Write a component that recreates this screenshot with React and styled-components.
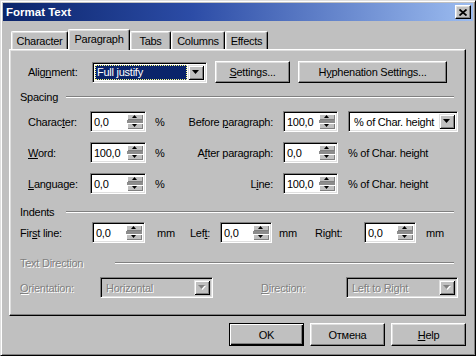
import React from 'react';
import styled, { createGlobalStyle } from 'styled-components';

const GlobalStyle = createGlobalStyle`
  html, body {
    margin: 0;
    padding: 0;
    background: #c0c0c0;
  }
  body {
    font-family: "Liberation Sans", Arial, sans-serif;
    font-size: 11px;
    letter-spacing: -0.25px;
    color: #000;
  }
`;

const Window = styled.div`
  width: 476px;
  height: 356px;
  box-sizing: border-box;
  background: #c0c0c0;
  border: 1px solid;
  border-color: #dfdfdf #000 #000 #dfdfdf;
  box-shadow: inset 1px 1px #fff, inset -1px -1px #808080;
  padding: 2px;
  display: flex;
  flex-direction: column;
`;

const TitleBar = styled.div`
  height: 18px;
  flex: none;
  display: flex;
  align-items: center;
  justify-content: space-between;
  padding: 0 2px 0 3px;
  background: linear-gradient(90deg, #0a246a 0%, #2c4ca6 40%, #9cbcf0 100%);
  color: #fff;
  font-weight: bold;
  font-size: 11.5px;
  letter-spacing: 0;
`;

const CloseBtn = styled.div`
  width: 16px;
  height: 14px;
  box-sizing: border-box;
  background: #c0c0c0;
  border: 1px solid;
  border-color: #fff #000 #000 #fff;
  box-shadow: inset -1px -1px #808080, inset 1px 1px #dfdfdf;
  display: flex;
  align-items: center;
  justify-content: center;
`;

const Body = styled.div`
  padding: 0 7px 0 6px;
  display: flex;
  flex-direction: column;
`;

const TabStrip = styled.div`
  display: flex;
  align-items: flex-end;
  height: 20px;
  margin-top: 8px;
  padding-left: 2px;
`;

const Tab = styled.div`
  width: ${p => p.w}px;
  height: ${p => (p.active ? 21 : 18)}px;
  margin-bottom: ${p => (p.active ? -1 : 0)}px;
  padding-bottom: ${p => (p.active ? 3 : 0)}px;
  box-sizing: border-box;
  border-top: 1px solid #fff;
  border-left: 1px solid #fff;
  border-right: 1px solid #000;
  border-radius: 2px 2px 0 0;
  box-shadow: inset -1px 0 #808080, inset 1px 1px #dfdfdf;
  background: #c0c0c0;
  display: flex;
  align-items: center;
  justify-content: center;
  position: relative;
  z-index: ${p => (p.active ? 1 : 0)};
`;

const Panel = styled.div`
  height: 267px;
  box-sizing: border-box;
  border: 1px solid;
  border-color: #fff #000 #000 #fff;
  box-shadow: inset -1px -1px #808080, inset 1px 1px #dfdfdf;
  padding: 11px 11px 0 10px;
  display: flex;
  flex-direction: column;
`;

const Row = styled.div`
  display: flex;
  align-items: center;
  height: ${p => p.h || 21}px;
  margin-top: ${p => p.mt || 0}px;
  margin-left: ${p => p.ml || 0}px;
`;

const Grid = styled.div`
  display: flex;
  flex-direction: column;
  gap: 10px;
  margin-top: ${p => p.mt}px;
  margin-left: ${p => p.ml || 0}px;
`;

const Label = styled.span`
  width: ${p => p.w}px;
  flex: none;
  margin-left: ${p => p.ml || 0}px;
  white-space: nowrap;
  text-align: ${p => (p.right ? 'right' : 'left')};
  color: ${p => (p.disabled ? '#808080' : '#000')};
  text-shadow: ${p => (p.disabled ? '1px 1px 0 #fff' : 'none')};
`;

const Key = styled.span`
  text-decoration: underline;
`;

const GroupHead = styled.div`
  display: flex;
  align-items: center;
  height: 14px;
  margin-top: ${p => p.mt}px;
`;

const GroupTitle = styled.span`
  width: ${p => p.w}px;
  flex: none;
  white-space: nowrap;
  color: ${p => (p.disabled ? '#808080' : '#000')};
  text-shadow: ${p => (p.disabled ? '1px 1px 0 #fff' : 'none')};
`;

const GroupLine = styled.div`
  flex: 1;
  height: 0;
  border-top: 1px solid #808080;
  border-bottom: 1px solid #fff;
`;

const Sunken = styled.div`
  width: ${p => p.w}px;
  height: 21px;
  flex: none;
  box-sizing: border-box;
  margin-left: ${p => p.ml || 0}px;
  border: 1px solid;
  border-color: #808080 #fff #fff #808080;
  box-shadow: inset 1px 1px #000, inset -1px -1px #dfdfdf;
  background: ${p => (p.disabled ? '#c0c0c0' : '#fff')};
  padding: 2px;
  display: flex;
`;

const FieldText = styled.div`
  flex: 1;
  padding-left: ${p => p.pl ?? 1}px;
  line-height: 16px;
  white-space: nowrap;
  overflow: hidden;
  color: ${p => (p.disabled ? '#808080' : '#000')};
  text-shadow: ${p => (p.disabled ? '1px 1px 0 #fff' : 'none')};
`;

const Highlight = styled.div`
  flex: 1;
  margin: 0 1px 0 0;
  padding-left: 2px;
  line-height: 15px;
  background: #0a246a;
  color: #fff;
  outline: 1px dotted #ffff80;
  outline-offset: -1px;
  white-space: nowrap;
`;

const Raised = styled.div`
  background: #c0c0c0;
  box-shadow: inset 1px 1px #dfdfdf, inset -1px -1px #000, inset 2px 2px #fff, inset -2px -2px #808080;
  display: flex;
  align-items: center;
  justify-content: center;
`;

const DropBtn = styled(Raised)`
  width: 16px;
  flex: none;
`;

const SpinCol = styled.div`
  width: 16px;
  flex: none;
  display: flex;
  flex-direction: column;
`;

const SpinBtn = styled.div`
  height: 7px;
  background: #c0c0c0;
  box-shadow: inset 1px 1px #fff, inset -1px -1px #808080;
  display: flex;
  align-items: center;
  justify-content: center;
`;

const SpinGap = styled.div`
  height: 3px;
  background: #8c8c8c;
`;

const Unit = styled.span`
  width: ${p => p.w}px;
  flex: none;
  margin-left: ${p => p.ml || 0}px;
  white-space: nowrap;
`;

const Button = styled.button`
  width: ${p => p.w || 75}px;
  height: ${p => p.h || 23}px;
  flex: none;
  margin-left: ${p => p.ml || 0}px;
  box-sizing: border-box;
  padding: 0;
  font: inherit;
  letter-spacing: inherit;
  color: #000;
  background: #c0c0c0;
  border: 1px solid;
  border-color: ${p => (p.primary ? '#000' : '#fff #000 #000 #fff')};
  box-shadow: ${p =>
    p.primary
      ? 'inset 1px 1px #fff, inset -1px -1px #000, inset -2px -2px #808080'
      : 'inset -1px -1px #808080, inset 1px 1px #dfdfdf'};
`;

const Footer = styled.div`
  display: flex;
  justify-content: flex-end;
  gap: 6px;
  margin-top: 7px;
`;

const Tri = ({ up, w = 5, h = 3, color = '#000', shadow }) => (
  <svg width={w + 1} height={h + 1} viewBox={`0 0 ${w + 1} ${h + 1}`}>
    {shadow && (
      <polygon
        points={up ? `${w / 2 + 1},1 ${w + 1},${h + 1} 1,${h + 1}` : `1,1 ${w + 1},1 ${w / 2 + 1},${h + 1}`}
        fill="#fff"
      />
    )}
    <polygon
      points={up ? `${w / 2},0 ${w},${h} 0,${h}` : `0,0 ${w},0 ${w / 2},${h}`}
      fill={color}
    />
  </svg>
);

const Spinner = ({ w, value, ml }) => (
  <Sunken w={w} ml={ml}>
    <FieldText>{value}</FieldText>
    <SpinCol>
      <SpinBtn><Tri up /></SpinBtn>
      <SpinGap />
      <SpinBtn><Tri /></SpinBtn>
    </SpinCol>
  </Sunken>
);

const Select = ({ w, ml, value, disabled, selected }) => (
  <Sunken w={w} ml={ml} disabled={disabled}>
    {selected ? (
      <Highlight>{value}</Highlight>
    ) : (
      <FieldText pl={3} disabled={disabled}>{value}</FieldText>
    )}
    <DropBtn>
      <Tri w={7} h={4} color={disabled ? '#808080' : '#000'} shadow={disabled} />
    </DropBtn>
  </Sunken>
);

const tabs = [
  { name: 'Character', w: 57 },
  { name: 'Paragraph', w: 62, active: true },
  { name: 'Tabs', w: 41 },
  { name: 'Columns', w: 54 },
  { name: 'Effects', w: 43 },
];

const spacing = [
  { label: <>Charac<Key>t</Key>er:</>, value: '0,0', right: <>Before <Key>p</Key>aragraph:</>, rvalue: '100,0', dropdown: true },
  { label: <><Key>W</Key>ord:</>, value: '100,0', right: <>A<Key>f</Key>ter paragraph:</>, rvalue: '0,0' },
  { label: <><Key>L</Key>anguage:</>, value: '0,0', right: <>L<Key>i</Key>ne:</>, rvalue: '100,0' },
];

export default function App() {
  return (
    <>
      <GlobalStyle />
      <Window>
        <TitleBar>
          <span>Format Text</span>
          <CloseBtn>
            <svg width="8" height="7" viewBox="0 0 8 7">
              <path d="M0.5 0.5 L7.5 6.5 M7.5 0.5 L0.5 6.5" stroke="#000" strokeWidth="1.8" />
            </svg>
          </CloseBtn>
        </TitleBar>
        <Body>
          <TabStrip>
            {tabs.map(t => (
              <Tab key={t.name} w={t.w} active={t.active}>{t.name}</Tab>
            ))}
          </TabStrip>
          <Panel>
            <Row h={22} ml={8}>
              <Label w={64}>Alig<Key>n</Key>ment:</Label>
              <Select w={115} value="Full justify" selected />
              <Button w={75} h={22} ml={8}><Key>S</Key>ettings...</Button>
              <Button w={149} h={22} ml={8}>H<Key>y</Key>phenation Settings...</Button>
            </Row>

            <GroupHead mt={7}>
              <GroupTitle w={46}>Spacing</GroupTitle>
              <GroupLine />
            </GroupHead>
            <Grid mt={7} ml={8}>
              {spacing.map((r, i) => (
                <Row key={i}>
                  <Label w={62}>{r.label}</Label>
                  <Spinner w={56} value={r.value} />
                  <Unit w={25} ml={9}>%</Unit>
                  <Label w={93} right>{r.right}</Label>
                  <Spinner w={55} ml={10} value={r.rvalue} />
                  {r.dropdown ? (
                    <Select w={110} ml={10} value="% of Char. height" />
                  ) : (
                    <Unit ml={10}>% of Char. height</Unit>
                  )}
                </Row>
              ))}
            </Grid>

            <GroupHead mt={11}>
              <GroupTitle w={46}>Indents</GroupTitle>
              <GroupLine />
            </GroupHead>
            <Row mt={3}>
              <Label w={72}>Fir<Key>s</Key>t line:</Label>
              <Spinner w={53} value="0,0" />
              <Unit w={33} ml={12}>mm</Unit>
              <Label w={30}>Lef<Key>t</Key>:</Label>
              <Spinner w={52} value="0,0" />
              <Unit w={36} ml={7}>mm</Unit>
              <Label w={49}>Ri<Key>g</Key>ht:</Label>
              <Spinner w={52} value="0,0" />
              <Unit ml={10}>mm</Unit>
            </Row>

            <GroupHead mt={13}>
              <GroupTitle w={95} disabled>Text Direction</GroupTitle>
              <GroupLine />
            </GroupHead>
            <Row mt={7}>
              <Label w={80} disabled><Key>O</Key>rientation:</Label>
              <Select w={113} value="Horizontal" disabled />
              <Label w={85} ml={48} disabled><Key>D</Key>irection:</Label>
              <Select w={112} value="Left to Right" disabled />
            </Row>
          </Panel>
          <Footer>
            <Button primary>OK</Button>
            <Button>Отмена</Button>
            <Button><Key>H</Key>elp</Button>
          </Footer>
        </Body>
      </Window>
    </>
  );
}
